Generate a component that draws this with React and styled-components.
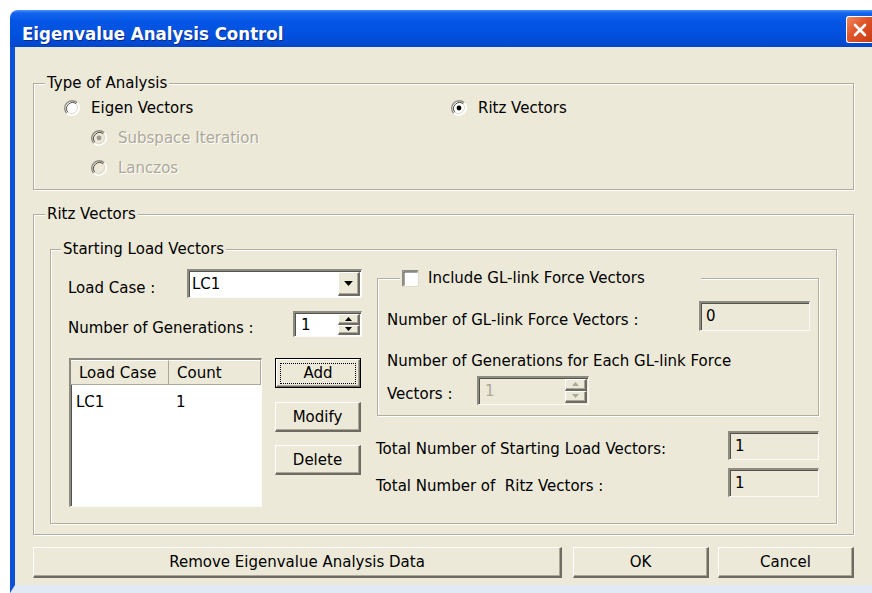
import React from 'react';
import styled, { createGlobalStyle, css } from 'styled-components';

const GlobalStyle = createGlobalStyle`
  html, body {
    margin: 0;
    padding: 0;
    background: #fff;
  }
  body {
    font-family: 'DejaVu Sans', 'Liberation Sans', sans-serif;
    font-size: 15px;
    color: #000;
  }
  * { box-sizing: border-box; }
`;

const FACE = '#ece9d8';

const sunken = css`
  border-style: solid;
  border-width: 2px 1px 1px 2px;
  border-color: #8e8c80 #fbfaf6 #fbfaf6 #8e8c80;
  box-shadow: inset 1px 1px 0 #55544c;
`;

const raised = css`
  border-style: solid;
  border-width: 1px 2px 2px 1px;
  border-color: #fff #6e6c62 #6e6c62 #fff;
  box-shadow: inset -1px -1px 0 #aca899;
  background: ${FACE};
`;

const Window = styled.div`
  margin: 10px 0 0 10px;
  width: 862px;
  height: 583px;
  display: flex;
  flex-direction: column;
`;

const TitleBar = styled.div`
  flex: none;
  height: 37px;
  border-radius: 8px 0 0 0;
  background: linear-gradient(to bottom, #4a95ff 0%, #1463ee 8%, #0556e6 30%, #0250dd 70%, #0146cb 100%);
  display: flex;
  align-items: center;
  justify-content: space-between;
  padding-left: 12px;
`;

const Title = styled.span`
  font-family: 'DejaVu Sans', 'Liberation Sans Narrow', sans-serif;
  font-stretch: condensed;
  font-weight: bold;
  font-size: 18.5px;
  padding-top: 9px;
  color: #fff;
  text-shadow: 1px 1px 0 #0a2a8a;
`;

const CloseButton = styled.div`
  width: 26px;
  height: 27px;
  margin-top: 2px;
  border: 1px solid #fff;
  border-right: none;
  border-radius: 3px 0 0 3px;
  background: linear-gradient(135deg, #f08a5c 0%, #e0542a 45%, #c63c14 100%);
  display: flex;
  align-items: center;
  justify-content: center;
`;

const Body = styled.div`
  flex: 1;
  background: ${FACE};
  border-left: 5px solid #0c4fd8;
  border-bottom: 8px solid #e2e8f4;
  padding: 36px 18px 7px;
  display: flex;
  flex-direction: column;
`;

const Group = styled.div`
  border: 1px solid #b1ae9f;
  box-shadow: inset 1px 1px 0 #fff, 1px 1px 0 #fff;
  display: flex;
  flex-direction: column;
  margin: ${p => p.$margin || '0'};
`;

const Legend = styled.div`
  align-self: flex-start;
  margin: ${p => p.$top ?? -10}px 0 0 ${p => p.$left}px;
  height: ${p => p.$h || 18}px;
  padding: 0 ${p => p.$pr || 2}px 0 2px;
  background: ${FACE};
  display: flex;
  align-items: center;
  gap: 9px;
  white-space: nowrap;
`;

const GroupBody = styled.div`
  padding: ${p => p.$pad};
  display: flex;
  flex-direction: column;
`;

const OptionGrid = styled.div`
  display: grid;
  grid-template-columns: 387px 1fr;
  grid-auto-rows: 20px;
  row-gap: 10px;
  padding: 6px 0 11px 29px;
`;

const Option = styled.label`
  display: flex;
  align-items: center;
  gap: 10px;
  margin-left: ${p => (p.$indent ? 27 : 0)}px;
  grid-column: ${p => p.$col || 'auto'};
`;

const Caption = styled.span`
  white-space: pre;
  color: ${p => (p.$disabled ? '#aca899' : '#000')};
  text-shadow: ${p => (p.$disabled ? '1px 1px 0 #fff' : 'none')};
`;

// labels beside a field sit a few pixels below the field's middle
const FieldLabel = styled.span`
  white-space: pre;
  padding-top: ${p => p.$drop ?? 7}px;
  width: ${p => (p.$w ? `${p.$w}px` : 'auto')};
`;

const Columns = styled.div`
  display: flex;
  gap: 14px;
  padding: 11px 17px 16px 17px;
`;

const LeftColumn = styled.div`
  width: 294px;
  display: flex;
  flex-direction: column;
`;

const RightColumn = styled.div`
  flex: 1;
  display: flex;
  flex-direction: column;
`;

const FieldRow = styled.div`
  display: flex;
  align-items: center;
  justify-content: ${p => (p.$start ? 'flex-start' : 'space-between')};
  margin-top: ${p => p.$mt || 0}px;
`;

const Field = styled.div`
  ${sunken};
  width: ${p => p.$w}px;
  height: ${p => p.$h}px;
  background: ${p => (p.$readOnly ? FACE : '#fff')};
  color: ${p => (p.$disabled ? '#aca899' : '#000')};
  display: flex;
  align-items: stretch;
  padding: 1px 1px 1px 3px;
`;

const FieldText = styled.span`
  flex: 1;
  display: flex;
  align-items: ${p => (p.$top ? 'flex-start' : 'center')};
  padding-top: ${p => (p.$top ? 3 : 0)}px;
  padding-left: ${p => p.$pl || 0}px;
`;

const DropButton = styled.div`
  ${raised};
  width: 22px;
  display: flex;
  align-items: center;
  justify-content: center;
`;

const SpinStack = styled.div`
  width: 22px;
  display: flex;
  flex-direction: column;
`;

const SpinHalf = styled.div`
  ${raised};
  flex: 1;
  display: flex;
  align-items: center;
  justify-content: center;
`;

const ListArea = styled.div`
  display: flex;
  gap: 13px;
  margin-top: 21px;
`;

const ListView = styled.div`
  ${sunken};
  margin-left: 1px;
  width: 193px;
  height: 149px;
  background: #fff;
  display: flex;
  flex-direction: column;
`;

const ListHeader = styled.div`
  display: flex;
  height: 25px;
  flex: none;
`;

const HeaderCell = styled.div`
  ${raised};
  box-shadow: none;
  border-width: 1px 1px 1px 0;
  border-color: #fff #aca899 #aca899 #fff;
  flex: ${p => (p.$w ? `0 0 ${p.$w}px` : 1)};
  padding-left: 8px;
  display: flex;
  align-items: center;
`;

const ListRow = styled.div`
  display: flex;
  height: 22px;
  margin-top: 6px;
  align-items: center;
`;

const ListCell = styled.span`
  flex: ${p => (p.$w ? `0 0 ${p.$w}px` : 1)};
  padding-left: 5px;
`;

const ButtonStack = styled.div`
  display: flex;
  flex-direction: column;
  width: 86px;
`;

const Button = styled.div`
  ${raised};
  height: ${p => p.$h || 30}px;
  margin-top: ${p => p.$mt || 0}px;
  flex: ${p => (p.$grow ? 1 : 'none')};
  width: ${p => (p.$w ? `${p.$w}px` : 'auto')};
  display: flex;
  align-items: center;
  justify-content: center;
  ${p => p.$default && css`
    outline: 1px solid #000;
    outline-offset: -1px;
    border-width: 2px 2px 2px 2px;
    border-color: #fff #6e6c62 #6e6c62 #fff;
  `}
`;

const FocusBox = styled.span`
  border: 1px dotted #000;
  width: 76px;
  height: 21px;
  display: flex;
  align-items: center;
  justify-content: center;
`;

const LinkLine = styled.div`
  height: 18px;
  margin-top: 21px;
  display: flex;
  align-items: center;
  white-space: nowrap;
`;

const BottomBar = styled.div`
  display: flex;
  margin-top: 12px;
  height: 31px;
  gap: 9px;
`;

const Radio = ({ checked, disabled }) => (
  <svg width="18" height="18" viewBox="0 0 18 18">
    <circle cx="9" cy="9" r="7.5" fill={disabled ? FACE : '#fff'} />
    <path d="M3.7 14.3 A7.5 7.5 0 0 1 14.3 3.7" fill="none" stroke="#8e8c80" strokeWidth="1.4" />
    <path d="M4.8 13.2 A6 6 0 0 1 13.2 4.8" fill="none" stroke="#4d4c45" strokeWidth="1" />
    <path d="M14.3 3.7 A7.5 7.5 0 0 1 3.7 14.3" fill="none" stroke="#fff" strokeWidth="1.4" />
    <path d="M13.2 4.8 A6 6 0 0 1 4.8 13.2" fill="none" stroke="#dcd9c9" strokeWidth="1" />
    {checked && <circle cx="9" cy="9" r="2.4" fill={disabled ? '#9d9b90' : '#000'} />}
  </svg>
);

const CheckBox = () => (
  <svg width="17" height="17" viewBox="0 0 17 17">
    <rect x="0" y="0" width="17" height="17" fill="#fff" />
    <path d="M0.7 16.5 V0.7 H16.5" fill="none" stroke="#8e8c80" strokeWidth="1.4" />
    <path d="M2 15.5 V2 H15.5" fill="none" stroke="#4d4c45" strokeWidth="1" />
    <path d="M16.4 0.5 V16.4 H0.5" fill="none" stroke="#dcd9c9" strokeWidth="1" />
  </svg>
);

const DownArrow = ({ size = 9, color = '#000' }) => (
  <svg width={size} height={size / 2 + 1} viewBox="0 0 8 5">
    <path d="M0 0 H8 L4 4.5 Z" fill={color} />
  </svg>
);

const UpArrow = ({ size = 7, color = '#000' }) => (
  <svg width={size} height={size / 2 + 1} viewBox="0 0 8 5">
    <path d="M0 4.5 H8 L4 0 Z" fill={color} />
  </svg>
);

const CloseGlyph = () => (
  <svg width="14" height="14" viewBox="0 0 14 14">
    <path d="M2 2 L12 12 M12 2 L2 12" stroke="#fff" strokeWidth="2.6" strokeLinecap="round" />
  </svg>
);

const Spin = ({ w, h, value, disabled }) => {
  const arrow = disabled ? '#aca899' : '#000';
  return (
    <Field $w={w} $h={h} $readOnly={disabled} $disabled={disabled}>
      <FieldText $pl={3}>{value}</FieldText>
      <SpinStack>
        <SpinHalf><UpArrow color={arrow} /></SpinHalf>
        <SpinHalf><DownArrow size={7} color={arrow} /></SpinHalf>
      </SpinStack>
    </Field>
  );
};

export default function App() {
  return (
    <>
      <GlobalStyle />
      <Window>
        <TitleBar>
          <Title>Eigenvalue Analysis Control</Title>
          <CloseButton><CloseGlyph /></CloseButton>
        </TitleBar>
        <Body>
          <Group>
            <Legend $left={11}>Type of Analysis</Legend>
            <OptionGrid>
              <Option><Radio /><Caption>Eigen Vectors</Caption></Option>
              <Option><Radio checked /><Caption>Ritz Vectors</Caption></Option>
              <Option $indent $col="1"><Radio checked disabled /><Caption $disabled>Subspace Iteration</Caption></Option>
              <Option $indent $col="1"><Radio disabled /><Caption $disabled>Lanczos</Caption></Option>
            </OptionGrid>
          </Group>

          <Group $margin="24px 0 0 0">
            <Legend $left={11}>Ritz Vectors</Legend>
            <GroupBody $pad="26px 16px 10px 16px">
              <Group>
                <Legend $left={10}>Starting Load Vectors</Legend>
                <Columns>
                  <LeftColumn>
                    <FieldRow>
                      <FieldLabel $drop={9}>Load Case :</FieldLabel>
                      <Field $w={175} $h={29}>
                        <FieldText>LC1</FieldText>
                        <DropButton><DownArrow /></DropButton>
                      </Field>
                    </FieldRow>
                    <FieldRow $mt={13}>
                      <FieldLabel>Number of Generations :</FieldLabel>
                      <Spin w={69} h={26} value="1" />
                    </FieldRow>
                    <ListArea>
                      <ListView>
                        <ListHeader>
                          <HeaderCell $w={98}>Load Case</HeaderCell>
                          <HeaderCell>Count</HeaderCell>
                        </ListHeader>
                        <ListRow>
                          <ListCell $w={100}>LC1</ListCell>
                          <ListCell>1</ListCell>
                        </ListRow>
                      </ListView>
                      <ButtonStack>
                        <Button $default><FocusBox>Add</FocusBox></Button>
                        <Button $mt={14}>Modify</Button>
                        <Button $mt={13}>Delete</Button>
                      </ButtonStack>
                    </ListArea>
                  </LeftColumn>

                  <RightColumn>
                    <Group $margin="9px 0 0 1px">
                      <Legend $left={22} $top={-11} $h={20} $pr={56}>
                        <CheckBox />
                        <span>Include GL-link Force Vectors</span>
                      </Legend>
                      <GroupBody $pad="0 8px 10px 9px">
                        <FieldRow $mt={13}>
                          <FieldLabel>Number of GL-link Force Vectors :</FieldLabel>
                          <Field $w={111} $h={30} $readOnly>
                            <FieldText $top $pl={2}>0</FieldText>
                          </Field>
                        </FieldRow>
                        <LinkLine>Number of Generations for Each GL-link Force</LinkLine>
                        <FieldRow $mt={6} $start>
                          <FieldLabel $w={90}>Vectors :</FieldLabel>
                          <Spin w={112} h={29} value="1" disabled />
                        </FieldRow>
                      </GroupBody>
                    </Group>
                    <FieldRow $mt={15}>
                      <FieldLabel>Total Number of Starting Load Vectors:</FieldLabel>
                      <Field $w={91} $h={29} $readOnly>
                        <FieldText $top $pl={2}>1</FieldText>
                      </Field>
                    </FieldRow>
                    <FieldRow $mt={8}>
                      <FieldLabel>Total Number of  Ritz Vectors :</FieldLabel>
                      <Field $w={91} $h={29} $readOnly>
                        <FieldText $top $pl={2}>1</FieldText>
                      </Field>
                    </FieldRow>
                  </RightColumn>
                </Columns>
              </Group>
            </GroupBody>
          </Group>

          <BottomBar>
            <Button $grow $h={31} style={{ marginRight: 2 }}>Remove Eigenvalue Analysis Data</Button>
            <Button $w={136} $h={31}>OK</Button>
            <Button $w={136} $h={31}>Cancel</Button>
          </BottomBar>
        </Body>
      </Window>
    </>
  );
}
